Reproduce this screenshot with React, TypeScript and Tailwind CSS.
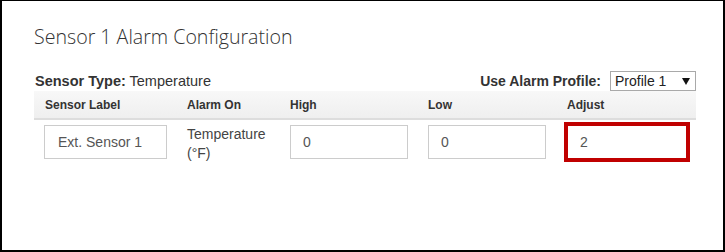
export default function App() {
  const sans = { fontFamily: '"Liberation Sans", Arial, sans-serif' };
  return (
    <div
      className="h-[252px] w-[725px] overflow-hidden border-b-2 border-l-2 border-r-2 border-t border-black bg-white"
      style={sans}
    >
      <div className="ml-[32px] w-[662px]">
        <h1
          className="pt-[22px] text-[19.6px] font-normal leading-[28px] text-[#333]"
          style={{ fontFamily: '"Open Sans", sans-serif', fontWeight: 300 }}
        >
          Sensor 1 Alarm Configuration
        </h1>

        <div className="mt-[20px] flex h-[20px] items-center justify-between text-[14.5px] leading-[20px] text-[#333]">
          <div className="pl-[1px]">
            <span className="font-bold">Sensor Type:</span> Temperature
          </div>
          <div className="flex items-center">
            <span className="text-[14px] font-bold">Use Alarm Profile:</span>
            <div className="ml-[9px] flex h-[20px] w-[86px] items-center justify-between border border-[#a9a9a9] bg-white pl-[4px] pr-[5px] text-[14px] text-[#222]">
              <span>Profile 1</span>
              <svg width="8" height="7" viewBox="0 0 8 7">
                <polygon points="0,0 8,0 4,7" fill="#111" />
              </svg>
            </div>
          </div>
        </div>

        <div className="grid h-[29px] grid-cols-[143px_103px_138px_140px_1fr] items-center border-b-2 border-[#ddd] bg-gradient-to-b from-[#f8f8f8] to-[#efefef] text-[12px] font-bold text-[#333]">
          <div className="pl-[11px]">Sensor Label</div>
          <div className="pl-[10px]">Alarm On</div>
          <div className="pl-[10px]">High</div>
          <div className="pl-[10px]">Low</div>
          <div className="pl-[9px]">Adjust</div>
        </div>

        <div className="grid grid-cols-[143px_103px_138px_140px_1fr] items-start pt-[5px] text-[14px] text-[#555]">
          <div className="pl-[10px]">
            <div className="flex h-[34px] w-[123px] items-center border border-[#ccc] px-[13px]">Ext. Sensor 1</div>
          </div>
          <div className="pl-[10px] leading-[19px] text-[#444]">
            Temperature
            <br />
            (°F)
          </div>
          <div className="pl-[10px]">
            <div className="flex h-[34px] w-[118px] items-center border border-[#ccc] px-[12px]">0</div>
          </div>
          <div className="pl-[10px]">
            <div className="flex h-[34px] w-[118px] items-center border border-[#ccc] px-[12px]">0</div>
          </div>
          <div className="-mt-[3px] pl-[6px]">
            <div className="flex h-[40px] w-[126px] items-center border-4 border-[#c00000] px-[12px]">2</div>
          </div>
        </div>
      </div>
    </div>
  );
}
